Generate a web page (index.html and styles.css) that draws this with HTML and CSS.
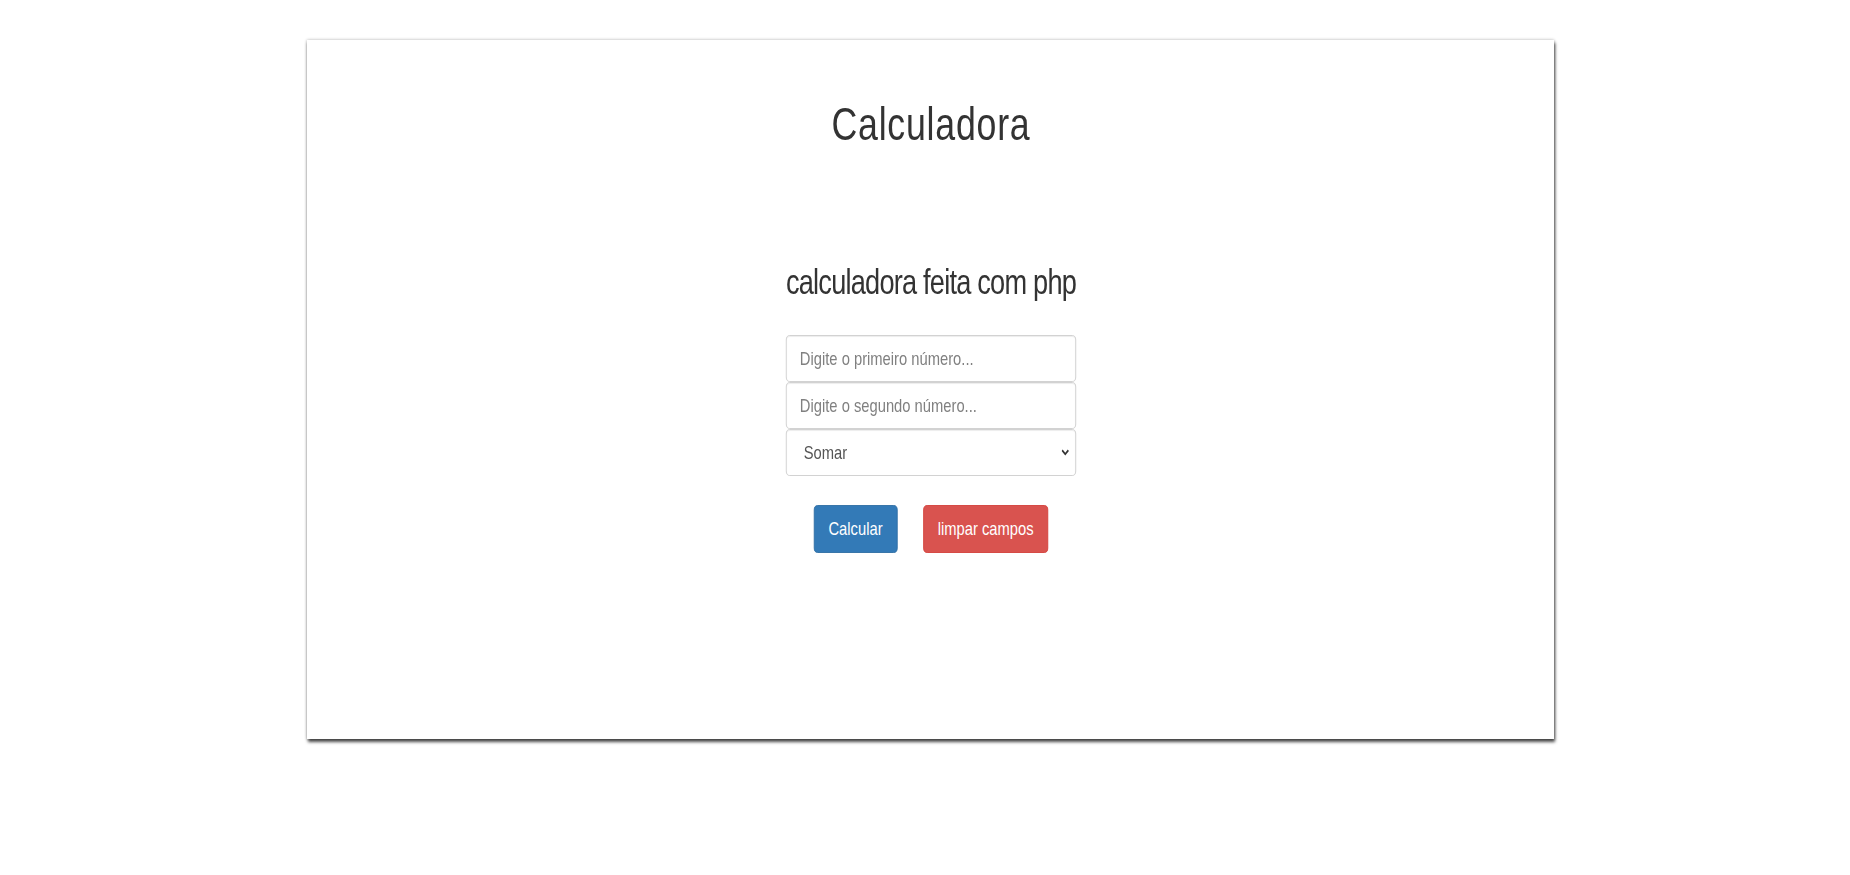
FILE: index.html
```html
<!DOCTYPE html>
<html lang="pt-BR">
<head>
<meta charset="utf-8">
<title>Calculadora</title>
<link rel="stylesheet" href="styles.css">
</head>
<body>
<main class="page">
  <section class="card">
    <div class="content">
      <h1 class="title">Calculadora</h1>
      <h3 class="subtitle">calculadora feita com php</h3>
      <form class="calc-form">
        <div class="fields">
          <input class="field" type="text" placeholder="Digite o primeiro número...">
          <input class="field" type="text" placeholder="Digite o segundo número...">
          <select class="field field-select">
            <option>Somar</option>
            <option>Subtrair</option>
            <option>Multiplicar</option>
            <option>Dividir</option>
          </select>
        </div>
        <div class="actions">
          <button type="button" class="btn btn-primary">Calcular</button>
          <button type="button" class="btn btn-danger">limpar campos</button>
        </div>
      </form>
    </div>
  </section>
</main>
</body>
</html>
```

FILE: styles.css
```css
html, body {
  margin: 0;
  padding: 0;
  background: #ffffff;
}

body {
  font-family: "Liberation Sans", Arial, sans-serif;
  color: #333333;
}

.page {
  padding: 40px 0 80px 307px;
}

.card {
  width: 1247px;
  height: 699px;
  box-sizing: border-box;
  background: #ffffff;
  box-shadow: 1px 3px 3px rgba(0, 0, 0, 0.7), 0 0 3px rgba(0, 0, 0, 0.3);
  padding-top: 59px;
  display: flex;
  justify-content: center;
}

.content {
  width: 520px;
  display: flex;
  flex-direction: column;
  align-items: center;
  transform: scaleX(0.776);
  transform-origin: 50% 0;
}

.title {
  margin: 0;
  font-size: 46px;
  line-height: 50px;
  font-weight: 400;
  letter-spacing: 1px;
  color: #333333;
}

.subtitle {
  margin: 113px 0 0;
  font-size: 35px;
  line-height: 40px;
  font-weight: 400;
  letter-spacing: -1px;
  color: #333333;
}

.calc-form {
  margin-top: 33px;
  display: flex;
  flex-direction: column;
  align-items: center;
}

.fields {
  display: flex;
  flex-direction: column;
  width: 374px;
}

.field {
  display: block;
  width: 100%;
  height: 47px;
  box-sizing: border-box;
  margin: 0;
  padding: 0 12px 0 17px;
  border: 1px solid #cccccc;
  border-radius: 5px;
  background: #ffffff;
  font-family: "Liberation Sans", Arial, sans-serif;
  font-size: 19px;
  color: #555555;
  box-shadow: inset 0 1px 1px rgba(0, 0, 0, 0.075);
  outline: none;
}

.field::placeholder {
  color: #808080;
  opacity: 1;
}

.field-select {
  appearance: none;
  -webkit-appearance: none;
  padding-left: 22px;
  background-image: url("data:image/svg+xml;utf8,<svg xmlns='http://www.w3.org/2000/svg' width='10' height='7' viewBox='0 0 10 7'><path d='M1 1.2 L5 5.2 L9 1.2' fill='none' stroke='%23333' stroke-width='2'/></svg>");
  background-repeat: no-repeat;
  background-position: right 8px center;
  background-size: 10px 7px;
}

.actions {
  margin-top: 29px;
  display: flex;
  gap: 33px;
}

.btn {
  height: 48px;
  box-sizing: border-box;
  padding: 0 18px;
  border: 1px solid transparent;
  border-radius: 5px;
  font-family: "Liberation Sans", Arial, sans-serif;
  font-size: 19px;
  line-height: 46px;
  color: #ffffff;
  cursor: pointer;
}

.btn-primary {
  background: #337ab7;
  border-color: #2e6da4;
}

.btn-danger {
  background: #d9534f;
  border-color: #d43f3a;
}
```
